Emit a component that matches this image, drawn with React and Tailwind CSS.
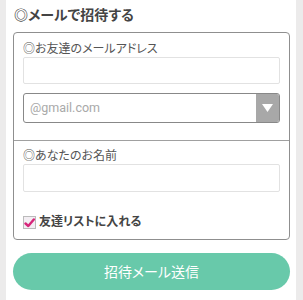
export default function App() {
  return (
    <div
      className="w-[303px] h-[300px] bg-[#ecebeb] overflow-hidden [font-feature-settings:'palt']"
      style={{ fontFamily: '"Noto Sans CJK JP", "Noto Sans", sans-serif' }}
    >
      <div className="mx-[6px] w-[290px] h-full bg-white px-[7px] pt-[3px]">
        <h2 className="text-[14px] font-bold text-[#444] leading-[22px] pl-[1px]">◎メールで招待する</h2>

        <div className="mt-[7px] w-[277px] border border-[#8f8f8f] rounded-[4px]">
          <div className="px-[9px] pt-[6px] pb-[17px]">
            <p className="text-[12px] text-[#555] leading-[18px]">◎お友達のメールアドレス</p>
            <div className="h-[27px] border border-[#e2e2e2] rounded-[2px] bg-white" />
            <div className="mt-[9px] h-[30px] flex border border-[#888] rounded-[3px] overflow-hidden">
              <span className="flex-1 pl-[6px] flex items-center text-[12.5px] text-[#a9a9a9]" style={{ fontFamily: 'Roboto, "Noto Sans", sans-serif' }}>
                @gmail.com
              </span>
              <span className="w-[23px] bg-[#a8a8a8] flex items-center justify-center">
                <svg width="11" height="8" viewBox="0 0 11 8">
                  <path d="M0 0H11L5.5 8Z" fill="#fff" />
                </svg>
              </span>
            </div>
          </div>
          <div className="border-t border-[#a0a0a0] px-[9px] pt-[5px] pb-[9px]">
            <p className="text-[12px] text-[#555] leading-[18px]">◎あなたのお名前</p>
            <div className="h-[28px] border border-[#e2e2e2] rounded-[2px] bg-white" />
            <div className="mt-[20px] flex items-center gap-[3px] h-[18px]">
              <span className="w-[13px] h-[13px] mt-[3px] border border-[#bbb] bg-[#f3eef3] flex items-center justify-center">
                <svg width="11" height="10" viewBox="0 0 11 10">
                  <path d="M1.5 5.5L4.3 8L9.8 1.5" fill="none" stroke="#d6257a" strokeWidth="2.4" strokeLinecap="round" strokeLinejoin="round" />
                </svg>
              </span>
              <span className="text-[12px] font-bold text-[#444] leading-[18px]">友達リストに入れる</span>
            </div>
          </div>
        </div>

        <button className="mt-[13px] w-[277px] h-[37px] rounded-full bg-[#68c9aa] text-white text-[14px] flex items-center justify-center">
          招待メール送信
        </button>
      </div>
    </div>
  );
}
